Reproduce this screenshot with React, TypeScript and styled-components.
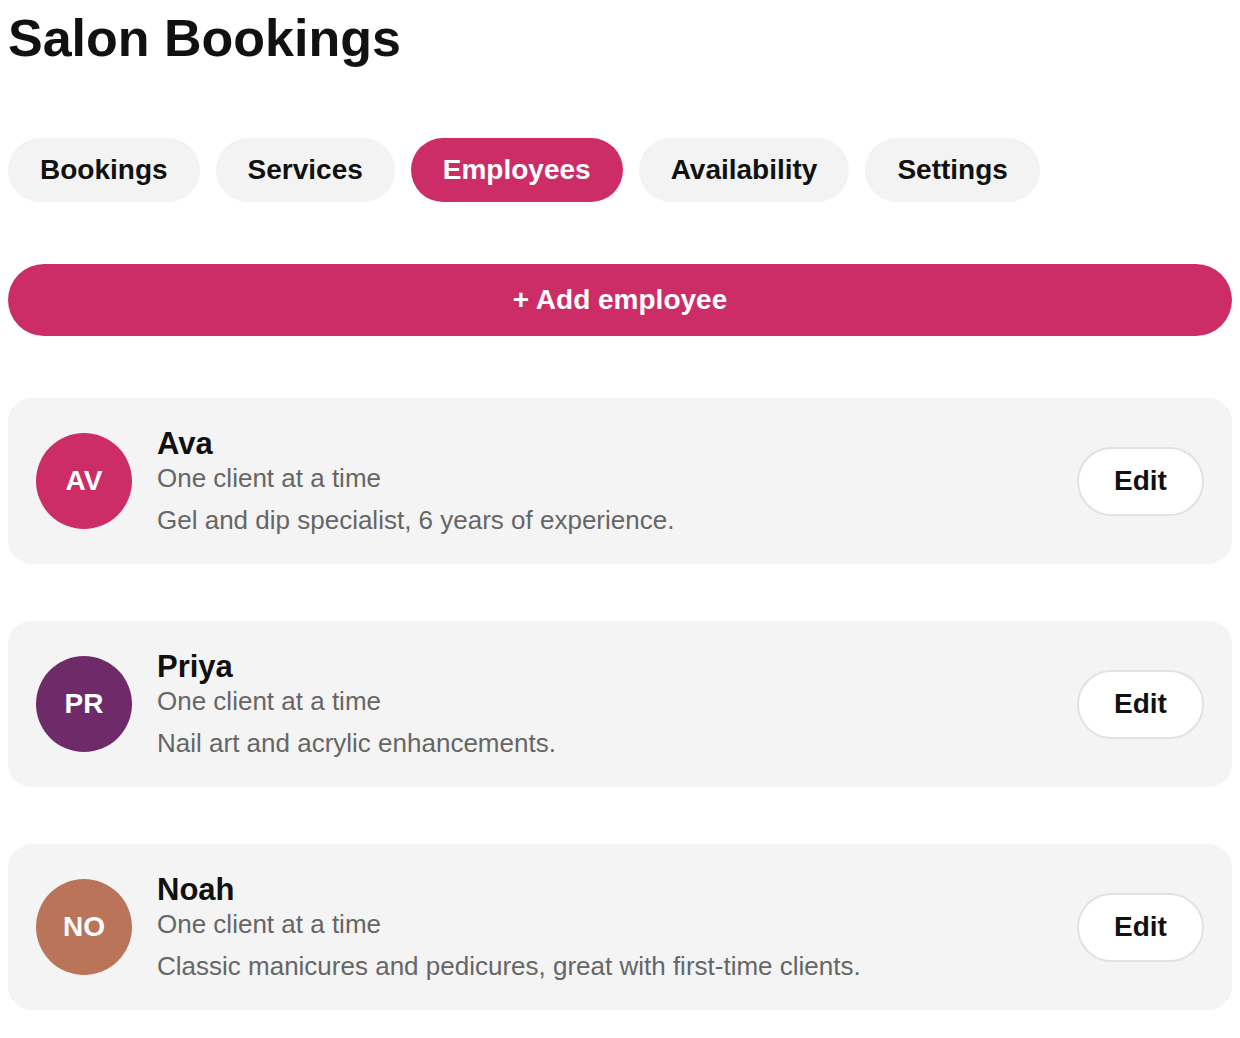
import React from "react";
import styled, { createGlobalStyle } from "styled-components";

const GlobalStyle = createGlobalStyle`
  body {
    margin: 8px;
    background: #ffffff;
    font-family: "Liberation Sans", Arial, Helvetica, sans-serif;
    color: #111111;
  }
  * { box-sizing: border-box; }
`;

const ACCENT = "#cc2d66";

const Page = styled.main`
  display: flex;
  flex-direction: column;
`;

const Title = styled.h1`
  margin: 0;
  font-size: 52px;
  line-height: 60px;
  font-weight: 700;
  color: #111111;
`;

const Tabs = styled.nav`
  display: flex;
  gap: 16px;
  margin-top: 70px;
`;

const Tab = styled.button<{ $active?: boolean }>`
  height: 64px;
  padding: 0 32px;
  border: none;
  border-radius: 32px;
  font-family: inherit;
  font-size: 28px;
  font-weight: 700;
  cursor: pointer;
  background: ${(p) => (p.$active ? ACCENT : "#f3f3f3")};
  color: ${(p) => (p.$active ? "#ffffff" : "#111111")};
`;

const AddButton = styled.button`
  margin-top: 62px;
  height: 72px;
  width: 100%;
  border: none;
  border-radius: 36px;
  background: ${ACCENT};
  color: #ffffff;
  font-family: inherit;
  font-size: 28px;
  font-weight: 700;
  cursor: pointer;
`;

const List = styled.section`
  display: flex;
  flex-direction: column;
  gap: 57px;
  margin-top: 62px;
`;

const Card = styled.article`
  display: flex;
  align-items: center;
  gap: 25px;
  padding: 28px 28px;
  background: #f4f4f4;
  border-radius: 24px;
`;

const Avatar = styled.div<{ $color: string }>`
  flex: none;
  width: 96px;
  height: 96px;
  border-radius: 50%;
  background: ${(p) => p.$color};
  color: #ffffff;
  display: flex;
  align-items: center;
  justify-content: center;
  font-size: 28px;
  font-weight: 700;
`;

const Info = styled.div`
  flex: 1;
  display: flex;
  flex-direction: column;
`;

const Name = styled.div`
  font-size: 31px;
  line-height: 36px;
  font-weight: 700;
  color: #111111;
`;

const Meta = styled.div<{ $spaced?: boolean }>`
  font-size: 26px;
  line-height: 32px;
  color: #666666;
  margin-top: ${(p) => (p.$spaced ? "10px" : "0")};
`;

const EditButton = styled.button`
  flex: none;
  width: 127px;
  height: 69px;
  border-radius: 35px;
  border: 2px solid #e2e2e2;
  background: #ffffff;
  color: #111111;
  font-family: inherit;
  font-size: 28px;
  font-weight: 700;
  cursor: pointer;
`;

type Employee = {
  initials: string;
  name: string;
  capacity: string;
  bio: string;
  color: string;
};

const employees: Employee[] = [
  {
    initials: "AV",
    name: "Ava",
    capacity: "One client at a time",
    bio: "Gel and dip specialist, 6 years of experience.",
    color: "#cc2d66",
  },
  {
    initials: "PR",
    name: "Priya",
    capacity: "One client at a time",
    bio: "Nail art and acrylic enhancements.",
    color: "#6e2a69",
  },
  {
    initials: "NO",
    name: "Noah",
    capacity: "One client at a time",
    bio: "Classic manicures and pedicures, great with first-time clients.",
    color: "#b9745a",
  },
];

const tabs = ["Bookings", "Services", "Employees", "Availability", "Settings"];

export default function App() {
  return (
    <>
      <GlobalStyle />
      <Page>
        <Title>Salon Bookings</Title>
        <Tabs>
          {tabs.map((t) => (
            <Tab key={t} $active={t === "Employees"}>
              {t}
            </Tab>
          ))}
        </Tabs>
        <AddButton>+ Add employee</AddButton>
        <List>
          {employees.map((e) => (
            <Card key={e.name}>
              <Avatar $color={e.color}>{e.initials}</Avatar>
              <Info>
                <Name>{e.name}</Name>
                <Meta>{e.capacity}</Meta>
                <Meta $spaced>{e.bio}</Meta>
              </Info>
              <EditButton>Edit</EditButton>
            </Card>
          ))}
        </List>
      </Page>
    </>
  );
}
